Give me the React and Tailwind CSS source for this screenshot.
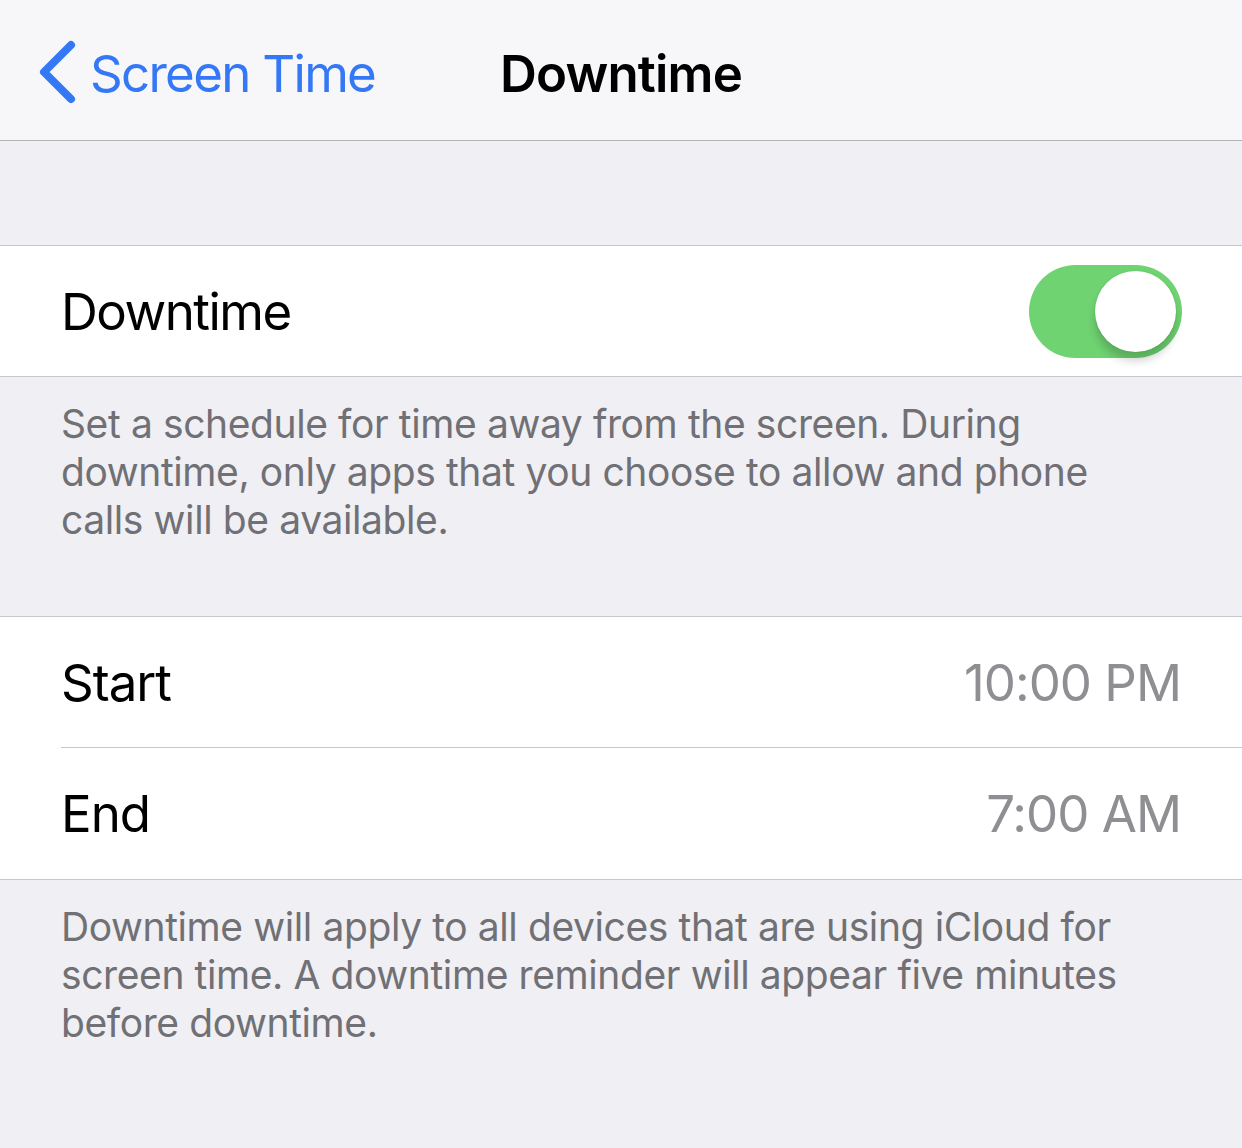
export default function App() {
  const font = { fontFamily: 'Inter, "Noto Sans", sans-serif' };
  return (
    <div className="w-[1242px] h-[1148px] bg-[#efeff4] overflow-hidden" style={font}>
      {/* Navigation bar */}
      <div className="relative h-[141px] bg-[#f7f7f9] border-b border-[#b4b4b8] flex items-center pt-[7px]">
        <div className="flex items-center pl-[38px] text-[#3478f6]">
          <svg width="38" height="64" viewBox="0 0 38 64" className="-mt-[3px]">
            <path d="M33 5 L6 32 L33 59" fill="none" stroke="#3478f6" strokeWidth="8" strokeLinecap="round" strokeLinejoin="round" />
          </svg>
          <span className="ml-[14px] text-[51px] tracking-[-1.7px] leading-none">Screen Time</span>
        </div>
        <div className="absolute left-0 right-0 text-center text-[51px] font-semibold tracking-[-0.8px] leading-none text-black">
          Downtime
        </div>
      </div>

      <div className="h-[104px]" />

      {/* Toggle row */}
      <div className="bg-white border-y border-[#c8c7cc] h-[132px] flex items-center justify-between pl-[61px] pr-[60px]">
        <span className="text-[51px] tracking-[-1.5px] text-black leading-none">Downtime</span>
        <div className="relative w-[153px] h-[93px] rounded-full bg-[#6fd371]">
          <div className="absolute right-[6px] top-[6px] w-[81px] h-[81px] rounded-full bg-white shadow-[0_9px_8px_rgba(0,0,0,0.18),0_0_2px_rgba(0,0,0,0.12)]" />
        </div>
      </div>

      <div className="h-[239px] pl-[61px] pr-[100px] pt-[23px] text-[39px] leading-[48px] tracking-[-0.4px] text-[#707075]">
        Set a schedule for time away from the screen. During downtime, only apps that you choose to allow and phone calls will be available.
      </div>

      {/* Schedule rows */}
      <div className="bg-white border-y border-[#c8c7cc]">
        <div className="h-[130px] flex items-center justify-between pl-[61px] pr-[61px]">
          <span className="text-[51px] tracking-[-1px] text-black leading-none">Start</span>
          <span className="text-[51px] tracking-[-1px] text-[#8e8e93] leading-none">10:00 PM</span>
        </div>
        <div className="ml-[61px] h-px bg-[#c8c7cc]" />
        <div className="h-[131px] flex items-center justify-between pl-[61px] pr-[61px]">
          <span className="text-[51px] tracking-[-1px] text-black leading-none">End</span>
          <span className="text-[51px] tracking-[-1px] text-[#8e8e93] leading-none">7:00 AM</span>
        </div>
      </div>

      <div className="pl-[61px] pr-[100px] pt-[23px] text-[39px] leading-[48px] tracking-[-0.4px] text-[#707075]">
        Downtime will apply to all devices that are using iCloud for screen time. A downtime reminder will appear five minutes before downtime.
      </div>
    </div>
  );
}
